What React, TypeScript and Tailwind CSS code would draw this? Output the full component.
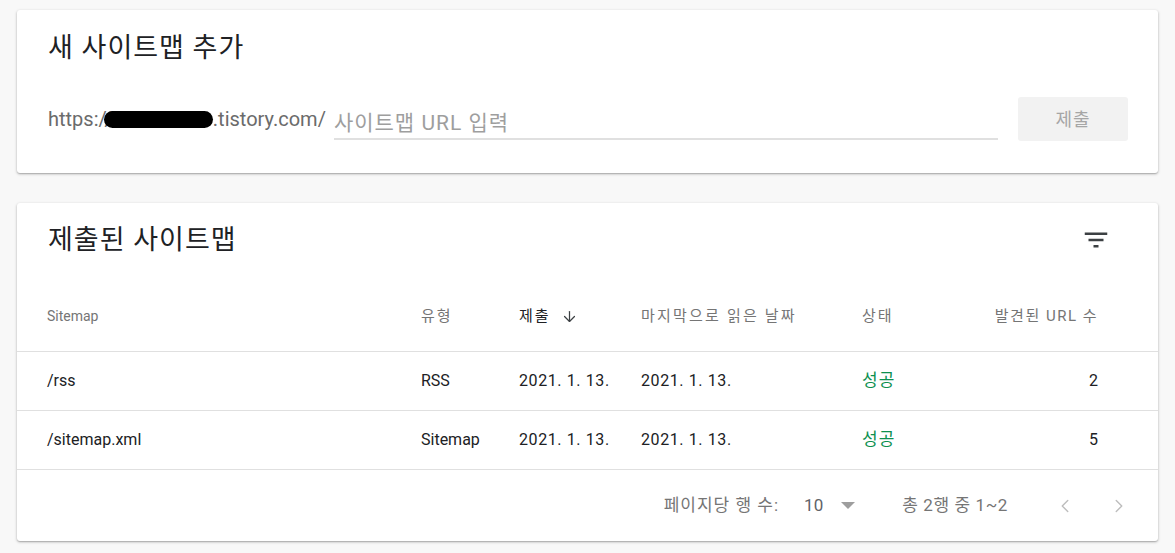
import { ArrowDown, ChevronLeft, ChevronRight } from 'lucide-react';

const font = "font-['Roboto','Noto_Sans_CJK_KR',sans-serif]";

const rows = [
  { path: '/rss', type: 'RSS', submitted: '2021. 1. 13.', lastRead: '2021. 1. 13.', status: '성공', count: 2 },
  { path: '/sitemap.xml', type: 'Sitemap', submitted: '2021. 1. 13.', lastRead: '2021. 1. 13.', status: '성공', count: 5 },
];

function FilterIcon() {
  return (
    <svg width="30" height="30" viewBox="0 0 24 24" className="fill-[#3c4043]">
      <path d="M10 18h4v-2h-4v2zM3 6v2h18V6H3zm3 7h12v-2H6v2z" />
    </svg>
  );
}

export default function App() {
  return (
    <div className={`${font} min-h-[553px] bg-[#f8f8f8] px-[17px] pt-[10px] pb-3 flex flex-col gap-[30px]`}>
      {/* 새 사이트맵 추가 */}
      <div className="bg-white rounded-[3px] shadow-[0_1px_3px_rgba(0,0,0,0.28),0_1px_1px_rgba(0,0,0,0.12)] h-[163px] pl-[31px] pr-[30px] pt-[22px]">
        <h2 className="text-[27px] leading-[32px] tracking-[1px] text-[#202124] font-normal">새 사이트맵 추가</h2>
        <div className="mt-[33px] flex items-end">
          <div className="text-[20px] leading-[24px] text-[#6b6b6b] pb-[9px] whitespace-nowrap">
            https://
            {/* redacted blog id */}
            <span className="inline-block ml-[-9px] w-[109px] h-[17px] rounded-full bg-black align-[-2px]" />
            .tistory.com/
          </div>
          <div className="ml-[8px] flex-1 border-b-2 border-[#e0e0e0] pb-[1px]">
            <span className="text-[21px] leading-[26px] tracking-[1px] text-[#9e9e9e]">사이트맵 URL 입력</span>
          </div>
          <button className="ml-[20px] mb-[-1px] w-[110px] h-[44px] rounded-[3px] bg-[#f2f2f2] text-[18px] tracking-[1px] text-[#a6a6a6]">
            제출
          </button>
        </div>
      </div>

      {/* 제출된 사이트맵 */}
      <div className="bg-white rounded-[3px] shadow-[0_1px_3px_rgba(0,0,0,0.28),0_1px_1px_rgba(0,0,0,0.12)] h-[338px] flex flex-col">
        <div className="flex items-center justify-between pl-[31px] pr-[47px] h-[74px]">
          <h2 className="text-[27px] leading-[32px] tracking-[1px] text-[#202124] font-normal">제출된 사이트맵</h2>
          <FilterIcon />
        </div>

        <div className="flex items-center h-[75px] pt-[5px] border-b border-[#e0e0e0] text-[15px] text-[#757575]">
          <div className="pl-[30px] w-[404px] text-[14px]">Sitemap</div>
          <div className="w-[98px] tracking-[2px]">유형</div>
          <div className="w-[122px] flex items-center gap-[10px] text-[#202124] tracking-[2px]">
            제출 <ArrowDown size={17} strokeWidth={1.75} className="text-[#3c4043]" />
          </div>
          <div className="w-[221px] tracking-[2.2px]">마지막으로 읽은 날짜</div>
          <div className="w-[100px] tracking-[2px]">상태</div>
          <div className="w-[136px] text-right tracking-[1.5px]">발견된 URL 수</div>
        </div>

        {rows.map((r) => (
          <div key={r.path} className="flex items-center h-[59px] border-b border-[#e0e0e0] text-[16px] text-[#202124]">
            <div className="pl-[30px] w-[404px]">{r.path}</div>
            <div className="w-[98px]">{r.type}</div>
            <div className="w-[122px] tracking-[0.6px]">{r.submitted}</div>
            <div className="w-[221px] tracking-[0.6px]">{r.lastRead}</div>
            <div className="w-[100px] text-[#0d904f] text-[17px] tracking-[1px]">{r.status}</div>
            <div className="w-[136px] text-right">{r.count}</div>
          </div>
        ))}

        <div className="flex-1 flex items-center justify-end pr-[28px] text-[17px] text-[#757575]">
          <span className="tracking-[1px]">페이지당 행 수:</span>
          <span className="ml-[25px] text-[#5f6368]">10</span>
          <span className="ml-[18px] w-0 h-0 border-l-[7px] border-r-[7px] border-t-[7px] border-l-transparent border-r-transparent border-t-[#9e9e9e]" />
          <span className="ml-[47px] tracking-[0.6px]">총 2행 중 1~2</span>
          <ChevronLeft size={22} strokeWidth={1.5} className="ml-[46px] text-[#bdbdbd]" />
          <ChevronRight size={22} strokeWidth={1.5} className="ml-[32px] text-[#bdbdbd]" />
        </div>
      </div>
    </div>
  );
}
